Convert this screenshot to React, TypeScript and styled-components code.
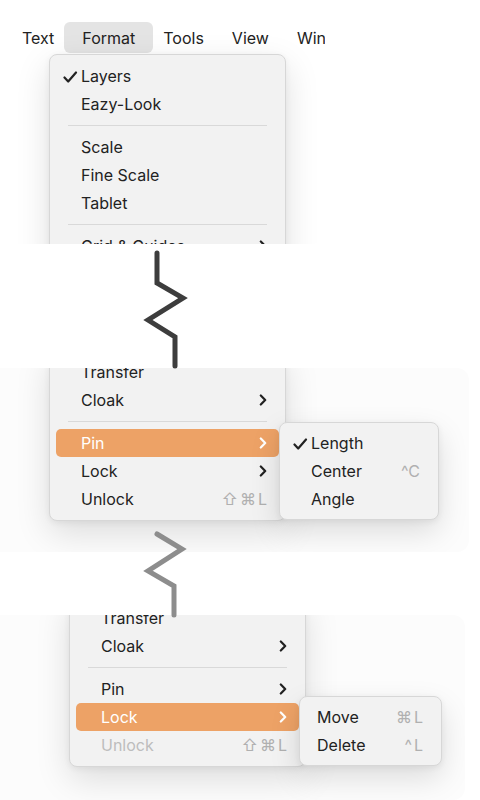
import React from 'react'
import styled, { createGlobalStyle } from 'styled-components'

type MenuEntry =
  | { kind: 'sep' }
  | {
      kind: 'item'
      label: string
      checked?: boolean
      arrow?: boolean
      shortcut?: string[]
      active?: boolean
      disabled?: boolean
      sub?: { width: number; inset: number; items: MenuEntry[] }
    }

const GlobalStyle = createGlobalStyle`
  html, body { margin: 0; padding: 0; background: #fff; }
  body {
    font-family: Inter, "DejaVu Sans", sans-serif;
    color: #222;
    -webkit-font-smoothing: antialiased;
  }
`

const Page = styled.div`
  width: 480px;
  height: 800px;
  overflow: hidden;
  background: #fff;
`

const Shot = styled.div<{ $w: number; $h: number; $bg: string; $pad?: string }>`
  position: relative;
  box-sizing: border-box;
  width: ${p => p.$w}px;
  height: ${p => p.$h}px;
  padding: ${p => p.$pad || '0'};
  background: ${p => p.$bg};
  border-radius: 0 12px 12px 0;
  overflow: hidden;
`

const MenuBar = styled.div`
  display: flex;
  align-items: center;
  font-size: 16px;
  white-space: nowrap;
  color: #222;
`

const BarItem = styled.div<{ $active?: boolean }>`
  height: 31px;
  line-height: 32px;
  padding: 0 ${p => (p.$active ? 18 : 14)}px;
  margin: 0 ${p => (p.$active ? -4 : 0)}px;
  border-radius: 6px;
  background: ${p => (p.$active ? '#e4e4e4' : 'transparent')};
`

const Menu = styled.div<{ $x: number; $y: number }>`
  position: relative;
  box-sizing: border-box;
  width: 237px;
  margin-left: ${p => p.$x}px;
  margin-top: ${p => p.$y}px;
  padding: 7px 0;
  background: #f2f2f2;
  border: 1px solid #d7d7d7;
  border-radius: 8px;
  box-shadow: 0 12px 34px rgba(0, 0, 0, 0.13), 0 2px 6px rgba(0, 0, 0, 0.06);
`

const SubMenu = styled.div<{ $w: number }>`
  position: absolute;
  left: 100%;
  top: -7px;
  z-index: 2;
  box-sizing: border-box;
  width: ${p => p.$w}px;
  padding: 6px 0;
  background: #f2f2f2;
  border: 1px solid #d7d7d7;
  border-radius: 8px;
  box-shadow: 0 12px 30px rgba(0, 0, 0, 0.13), 0 2px 6px rgba(0, 0, 0, 0.06);
`

const Row = styled.div<{ $active?: boolean; $disabled?: boolean; $inset: number }>`
  position: relative;
  display: flex;
  align-items: center;
  height: 28px;
  margin: 0 6px;
  padding: 0 12px 0 ${p => p.$inset}px;
  border-radius: 5px;
  font-size: 16px;
  white-space: nowrap;
  background: ${p => (p.$active ? '#eda266' : 'transparent')};
  color: ${p => (p.$active ? '#fff' : p.$disabled ? '#bdbdbd' : '#222')};
`

const Label = styled.span`
  flex: 1;
`

const CheckMark = styled.svg`
  position: absolute;
  left: 7px;
  top: 9px;
`

const Shortcut = styled.span`
  display: flex;
  gap: 2px;
  font-size: 16px;
  color: #b0b0b0;
`

const ShortcutKey = styled.span`
  font-family: Inter, "DejaVu Sans", sans-serif;
`

const Separator = styled.div`
  height: 15px;
  display: flex;
  align-items: center;
  margin: 0 18px;
  &::after {
    content: '';
    flex: 1;
    height: 1px;
    background: #d9d9d9;
  }
`

const Break = styled.div<{ $h: number }>`
  position: relative;
  z-index: 5;
  height: ${p => p.$h}px;
  svg { display: block; overflow: visible; }
`

const Check = () => (
  <CheckMark width="15" height="12" viewBox="0 0 15 12">
    <path d="M1.5 6.5 L5.2 10.5 L13 1.5" fill="none" stroke="currentColor" strokeWidth="2.2" strokeLinecap="round" strokeLinejoin="round" />
  </CheckMark>
)

const Chevron = () => (
  <svg width="8" height="12" viewBox="0 0 8 12">
    <path d="M1.8 1.5 L6.2 6 L1.8 10.5" fill="none" stroke="currentColor" strokeWidth="2.2" strokeLinecap="round" strokeLinejoin="round" />
  </svg>
)

const Entries = ({ items, inset }: { items: MenuEntry[]; inset: number }) => (
  <>
    {items.map((it, i) =>
      it.kind === 'sep' ? (
        <Separator key={i} />
      ) : (
        <Row key={i} $active={it.active} $disabled={it.disabled} $inset={inset}>
          {it.checked && <Check />}
          <Label>{it.label}</Label>
          {it.arrow && <Chevron />}
          {it.shortcut && (
            <Shortcut>
              {it.shortcut.map((k, j) => (
                <ShortcutKey key={j}>{k}</ShortcutKey>
              ))}
            </Shortcut>
          )}
          {it.sub && (
            <SubMenu $w={it.sub.width}>
              <Entries items={it.sub.items} inset={it.sub.inset} />
            </SubMenu>
          )}
        </Row>
      )
    )}
  </>
)

const Zigzag = ({ points, color }: { points: string; color: string }) => (
  <svg width="480" height="10">
    <polyline points={points} fill="none" stroke={color} strokeWidth="5" strokeLinecap="round" strokeLinejoin="miter" />
  </svg>
)

const formatMenu: MenuEntry[] = [
  { kind: 'item', label: 'Layers', checked: true },
  { kind: 'item', label: 'Eazy-Look' },
  { kind: 'sep' },
  { kind: 'item', label: 'Scale' },
  { kind: 'item', label: 'Fine Scale' },
  { kind: 'item', label: 'Tablet' },
  { kind: 'sep' },
  { kind: 'item', label: 'Grid & Guides', arrow: true },
]

const pinMenu: MenuEntry[] = [
  { kind: 'item', label: 'Transfer' },
  { kind: 'item', label: 'Cloak', arrow: true },
  { kind: 'sep' },
  {
    kind: 'item',
    label: 'Pin',
    arrow: true,
    active: true,
    sub: {
      width: 160,
      inset: 25,
      items: [
        { kind: 'item', label: 'Length', checked: true },
        { kind: 'item', label: 'Center', shortcut: ['^C'] },
        { kind: 'item', label: 'Angle' },
      ],
    },
  },
  { kind: 'item', label: 'Lock', arrow: true },
  { kind: 'item', label: 'Unlock', shortcut: ['⇧', '⌘', 'L'] },
]

const lockMenu: MenuEntry[] = [
  { kind: 'item', label: 'Transfer' },
  { kind: 'item', label: 'Cloak', arrow: true },
  { kind: 'sep' },
  { kind: 'item', label: 'Pin', arrow: true },
  {
    kind: 'item',
    label: 'Lock',
    arrow: true,
    active: true,
    sub: {
      width: 143,
      inset: 11,
      items: [
        { kind: 'item', label: 'Move', shortcut: ['⌘', 'L'] },
        { kind: 'item', label: 'Delete', shortcut: ['^', 'L'] },
      ],
    },
  },
  { kind: 'item', label: 'Unlock', disabled: true, shortcut: ['⇧', '⌘', 'L'] },
]

const barItems = ['Text', 'Format', 'Tools', 'View', 'Win']

export default function App() {
  return (
    <Page>
      <GlobalStyle />
      <Shot $w={325} $h={244} $bg="#fff" $pad="22px 0 0 8px">
        <MenuBar>
          {barItems.map(b => (
            <BarItem key={b} $active={b === 'Format'}>
              {b}
            </BarItem>
          ))}
        </MenuBar>
        <Menu $x={41} $y={1}>
          <Entries items={formatMenu} inset={25} />
        </Menu>
      </Shot>

      <Break $h={124}>
        <Zigzag points="157,9 157,39 183,54 148,76 175,93 175,122" color="#3d3d3d" />
      </Break>

      <Shot $w={469} $h={184} $bg="#fcfcfc">
        <Menu $x={49} $y={-18}>
          <Entries items={pinMenu} inset={25} />
        </Menu>
      </Shot>

      <Break $h={63}>
        <Zigzag points="157,-18 182,-3 148,19 174,34 174,63" color="#8d8d8d" />
      </Break>

      <Shot $w={465} $h={185} $bg="#fcfcfc">
        <Menu $x={69} $y={-19}>
          <Entries items={lockMenu} inset={25} />
        </Menu>
      </Shot>
    </Page>
  )
}
